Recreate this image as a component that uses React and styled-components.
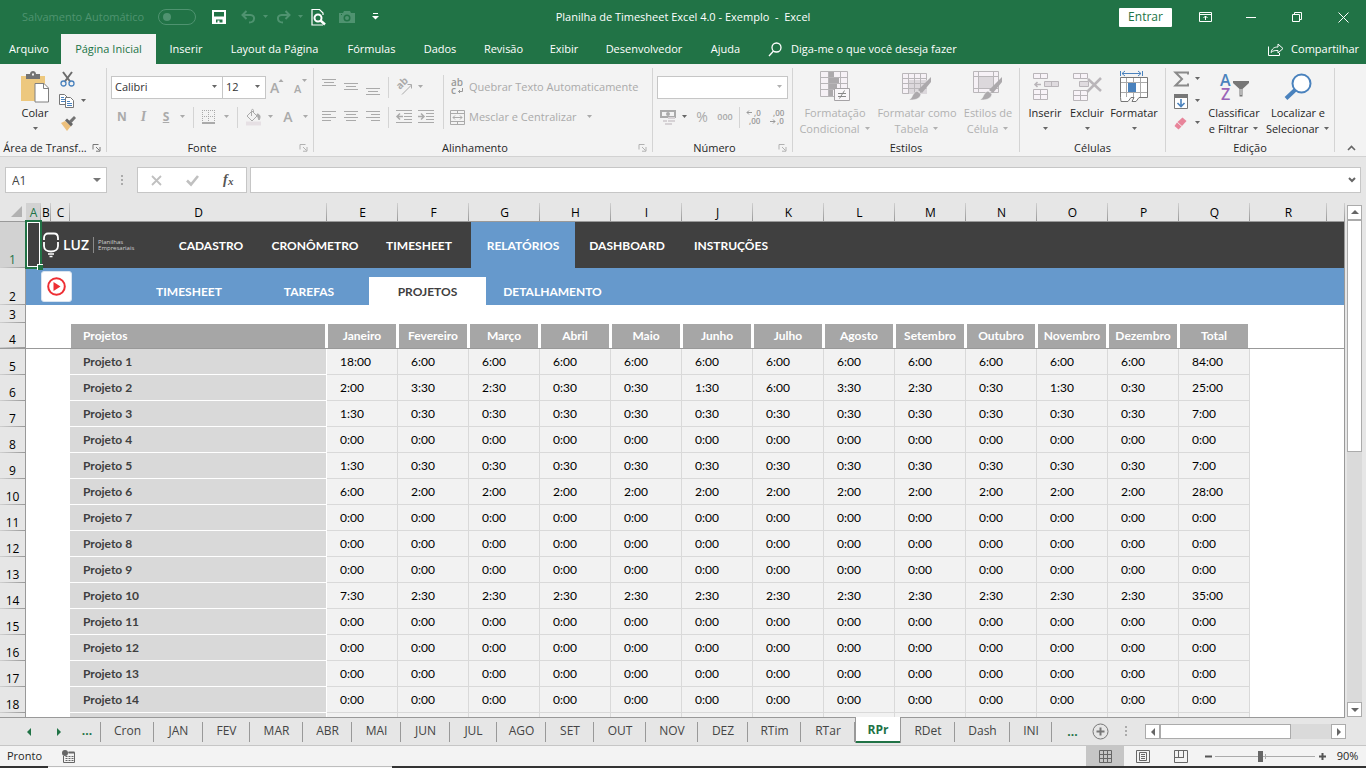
import React from "react";
import styled, { createGlobalStyle, css } from "styled-components";

const GlobalStyle = createGlobalStyle`
  *, *::before, *::after { box-sizing: border-box; }
  body { margin: 0; background: #e6e6e6; }
  button, input, select { font: inherit; color: inherit; margin: 0; }
  svg { display: block; flex: none; overflow: visible; }
`;

const UI = '"Open Sans", "Noto Sans", sans-serif';
const CELL = 'Lato, "Open Sans", sans-serif';
const GREEN = "#217346";
const INK = "#262626";
const DIM = "#b1b1b1";
const LINE = "#999999";

const Window = styled.div`
  display: flex;
  flex-direction: column;
  height: 100vh;
  min-width: 1100px;
  overflow: hidden;
  font: 11px/16px ${UI};
  color: ${INK};
`;

const PlainButton = styled.button`
  display: flex;
  align-items: center;
  justify-content: center;
  padding: 0;
  border: 0;
  background: transparent;
  white-space: nowrap;
`;

/* ---------- title bar ---------- */
const TitleBar = styled.header`
  display: grid;
  grid-template-columns: 1fr auto 1fr;
  align-items: center;
  height: 34px;
  flex: none;
  background: ${GREEN};
  color: #fff;
`;
const QuickAccess = styled.div`
  display: flex;
  align-items: center;
  padding-left: 22px;
`;
const AutoSave = styled.label`
  display: flex;
  align-items: center;
  justify-content: space-between;
  width: 174px;
  margin-right: 8px;
  color: #4f9370;
  white-space: nowrap;
`;
const Toggle = styled.input`
  appearance: none;
  width: 38px;
  height: 16px;
  border: 1px solid #4f9370;
  border-radius: 8px;
  padding: 3px 4px;
  &::before {
    content: "";
    display: block;
    width: 8px;
    height: 8px;
    border-radius: 4px;
    background: #4f9370;
  }
`;
const QuickButton = styled(PlainButton)`
  width: ${(p) => p.$w}px;
  height: 24px;
  color: ${(p) => (p.$off ? "#4f9370" : "#fff")};
`;
const Title = styled.h1`
  margin: 0;
  font: inherit;
  white-space: pre;
`;
const WindowTools = styled.div`
  display: flex;
  align-items: center;
  justify-content: flex-end;
`;
const SignIn = styled.button`
  width: 53px;
  height: 19px;
  margin-right: 10px;
  padding: 0;
  border: 0;
  border-radius: 1px;
  background: #fff;
  color: ${GREEN};
  font-size: 12px;
  line-height: 18px;
`;
const WindowButton = styled(PlainButton)`
  width: 46px;
  height: 32px;
`;

/* ---------- ribbon tabs ---------- */
const TabBar = styled.nav`
  display: flex;
  height: 30px;
  flex: none;
  background: ${GREEN};
  color: #fff;
`;
const RibbonTab = styled(PlainButton)`
  width: ${(p) => p.$w}px;
  ${(p) => p.$first && css`margin-right: 3px;`}
  ${(p) => p.$active && css`background: #f3f3f3; color: ${GREEN};`}
`;
const TellMe = styled(PlainButton)`
  gap: 9px;
  margin-left: 14px;
`;
const Share = styled(PlainButton)`
  gap: 7px;
  margin-left: auto;
  padding-right: 7px;
`;

/* ---------- ribbon ---------- */
const Ribbon = styled.div`
  display: flex;
  height: 93px;
  flex: none;
  padding-top: 4px;
  background: #f3f3f3;
  border-bottom: 1px solid #d2d2d2;
`;
const Group = styled.section`
  display: flex;
  flex-direction: column;
  flex: none;
  width: ${(p) => p.$w}px;
  height: 88px;
  padding-right: 1px;
  background: linear-gradient(#d4d4d4, #d4d4d4) right top / 1px 84px no-repeat;
`;
const GroupBody = styled.div`
  display: flex;
  flex: 1;
  min-height: 0;
  padding: ${(p) => p.$pad || "0"};
`;
const GroupFoot = styled.div`
  display: grid;
  grid-template-columns: ${(p) => (p.$launch ? "1fr 16px" : "1fr")};
  align-items: center;
  height: 17px;
  padding: 0 2px;
`;
const GroupName = styled.h2`
  margin: 0;
  font: inherit;
  text-align: center;
  white-space: nowrap;
`;
const Big = styled(PlainButton)`
  flex-direction: column;
  justify-content: flex-start;
  flex: none;
  width: ${(p) => p.$w}px;
  height: 70px;
  color: ${(p) => (p.$off ? DIM : INK)};
`;
const BigIcon = styled.span`
  display: flex;
  align-items: center;
  justify-content: center;
  height: 37px;
`;
const BigLine = styled.span`
  display: flex;
  align-items: center;
  gap: 4px;
  height: 16px;
`;
const Stack = styled.div`
  display: flex;
  flex-direction: column;
  gap: ${(p) => p.$gap || 0}px;
`;
const ToolRow = styled.div`
  display: flex;
  align-items: center;
  height: ${(p) => (p.$compact ? 22 : 24)}px;
  color: ${(p) => (p.$off ? "#aaa" : "#666")};
`;
const Tool = styled(PlainButton)`
  width: ${(p) => p.$w}px;
  height: 22px;
`;
const Letter = styled.span`
  font-size: ${(p) => p.$size || 14}px;
  font-weight: ${(p) => p.$weight || 700};
  font-style: ${(p) => (p.$italic ? "italic" : "normal")};
  font-family: ${(p) => (p.$italic ? '"Liberation Serif", serif' : UI)};
  text-decoration: ${(p) => (p.$under ? "underline" : "none")};
`;
const TextTool = styled(PlainButton)`
  gap: 4px;
  height: 22px;
`;
const Rule = styled.span`
  width: 1px;
  height: ${(p) => p.$h || 21}px;
  margin: 0 ${(p) => p.$m || 0}px;
  background: #d4d4d4;
`;
const Combo = styled.span`
  display: grid;
  align-items: center;
  width: ${(p) => p.$w}px;
  height: 23px;
  margin-right: -1px;
  border: 1px solid #c6c6c6;
  background: #fff;
  color: #666;
  > * { grid-area: 1 / 1; }
  > svg { justify-self: end; margin-right: 4px; pointer-events: none; }
`;
const Select = styled.select`
  appearance: none;
  width: 100%;
  height: 21px;
  padding: 0 3px;
  border: 0;
  background: transparent;
  color: #333;
`;
const Collapse = styled(PlainButton)`
  align-self: flex-end;
  height: 17px;
  margin-left: auto;
  margin-right: 10px;
  color: #666;
`;

/* ---------- formula bar ---------- */
const FormulaRow = styled.div`
  display: flex;
  align-items: center;
  height: 46px;
  flex: none;
  padding: 0 5px;
  background: #e6e6e6;
`;
const Box = styled.div`
  display: flex;
  align-items: center;
  height: 26px;
  border: 1px solid #c6c6c6;
  background: #fff;
  ${(p) => (p.$w ? css`width: ${p.$w}px;` : css`flex: 1;`)}
`;
const BoxInput = styled.input`
  flex: 1;
  min-width: 0;
  height: 24px;
  padding: 0 6px;
  border: 0;
  background: transparent;
  color: #444;
  font-size: 12px;
`;
const Dots = styled.span`
  display: flex;
  align-items: center;
  justify-content: center;
  flex: none;
  width: ${(p) => p.$w}px;
  color: #ababab;
`;

/* ---------- worksheet ---------- */
const Work = styled.main`
  display: flex;
  flex: 1;
  min-height: 0;
  background: #e6e6e6;
`;
const SheetPane = styled.div`
  flex: 1;
  min-width: 0;
  overflow: hidden;
  background: linear-gradient(#e6e6e6 18px, #fff 18px);
`;
const Sheet = styled.table`
  width: 100%;
  table-layout: fixed;
  border-collapse: separate;
  border-spacing: 0;
  background: #fff;
  font-size: 12px;
`;
const Row = styled.tr`
  height: ${(p) => p.$h}px;
  > * { padding: 0; }
`;
const Corner = styled.td`
  background: #e6e6e6;
  border-bottom: 1px solid ${LINE};
  > svg { margin-left: 11px; }
`;
const ColHead = styled.th`
  border-bottom: 1px solid ${(p) => (p.$on ? GREEN : LINE)};
  background: linear-gradient(#d0d0d0, ${LINE}) right / 1px 100% no-repeat, ${(p) => (p.$on ? "#d2d2d2" : "#e6e6e6")};
  color: ${(p) => (p.$on ? GREEN : "#000")};
  font-weight: 400;
  ${Row} > & { padding-top: 2px; }
`;
const RowHead = styled.th`
  border-right: 1px solid ${LINE};
  background: linear-gradient(90deg, #d0d0d0, ${LINE}) bottom / 100% 1px no-repeat, ${(p) => (p.$on ? "#d2d2d2" : "#e6e6e6")};
  color: ${(p) => (p.$on ? GREEN : "#000")};
  font-weight: 400;
  line-height: 16px;
  vertical-align: bottom;
  ${(p) => p.$freeze && css`border-bottom: 1px solid ${LINE};`}
`;
const BandCell = styled.td`
  position: relative;
  background: ${(p) => (p.$blue ? "#6699cc" : "#404040")};
  border-right: 1px solid ${LINE};
`;
const Cursor = styled.span`
  position: absolute;
  z-index: 1;
  top: -2px;
  left: -1px;
  width: 17px;
  height: 49px;
  border: 2px solid ${GREEN};
  box-shadow: inset 0 0 0 1px #fff;
  &::after {
    content: "";
    position: absolute;
    right: -3px;
    bottom: -3px;
    width: 6px;
    height: 6px;
    background: ${GREEN};
    border-top: 1px solid #fff;
    border-left: 1px solid #fff;
  }
`;
const Band = styled.div`
  display: flex;
  align-items: ${(p) => (p.$low ? "flex-end" : "stretch")};
  height: ${(p) => p.$h}px;
`;
const Brand = styled.div`
  display: flex;
  align-items: center;
  width: 133px;
  padding-left: 16px;
  color: #fff;
`;
const BrandName = styled.span`
  margin-left: 3px;
  padding-right: 4px;
  border-right: 1px solid #8a8a8a;
  font: 600 14px/16px "Open Sans", sans-serif;
`;
const BrandSub = styled.span`
  margin-left: 4px;
  color: #d0d0d0;
  font: 6px/6px "Open Sans", sans-serif;
`;
const PlayTile = styled(PlainButton)`
  width: 31px;
  height: 31px;
  margin: 0 57px 3px 15px;
  border-radius: 3px;
  background: #fff;
  border: 1px solid #d9e4f0;
`;
const NavLink = styled.a`
  display: flex;
  align-items: center;
  justify-content: center;
  width: ${(p) => p.$w}px;
  ${(p) => p.$h && css`height: ${p.$h}px;`}
  padding-top: 1px;
  color: ${(p) => p.$ink || "#fff"};
  background: ${(p) => p.$bg || "transparent"};
  font: 700 12px/16px ${CELL};
  text-decoration: none;
`;
const Blank = styled.td`
  ${(p) => p.$freeze && css`border-bottom: 1px solid ${LINE};`}
  ${(p) => p.$last && css`border-right: 1px solid ${LINE};`}
`;
const FieldHead = styled.th`
  border-bottom: 1px solid ${LINE};
  box-shadow: inset 1px 1px 0 #fff, inset -2px 0 0 #fff;
  background: #a6a6a6;
  color: #fff;
  font: 700 12px/16px ${CELL};
  text-align: ${(p) => (p.$left ? "left" : "center")};
  ${Row} > & { padding: 0 1px 0 ${(p) => (p.$left ? 13 : 0)}px; }
`;
const Project = styled.th`
  border-right: 1px solid #fff;
  border-bottom: 1px solid #fff;
  background: #d9d9d9;
  color: #404040;
  font: 700 12px/16px ${CELL};
  text-align: left;
  ${Row} > & { padding: 0 0 0 13px; }
`;
const Hours = styled.td`
  border-right: 1px solid #d9d9d9;
  border-bottom: 1px solid #d9d9d9;
  background: #f2f2f2;
  color: #000;
  font: 12px/16px ${CELL};
  ${Row} > & { padding: 0 0 0 13px; }
`;
const VScroll = styled.div`
  display: flex;
  flex-direction: column;
  flex: none;
  width: 15px;
  margin: 2px 4px 0 2px;
  background: #dadada;
`;
const ScrollButton = styled(PlainButton)`
  width: 15px;
  height: 15px;
  flex: none;
  border: 1px solid #ababab;
  background: #fff;
  color: #666;
  ${(p) => p.$end === "bottom" && css`margin-top: auto;`}
  ${(p) => p.$end === "right" && css`margin-left: auto;`}
`;
const VThumb = styled.div`
  height: 232px;
  width: 15px;
  border: 1px solid #ababab;
  background: #fff;
`;

/* ---------- sheet tabs ---------- */
const TabStrip = styled.div`
  display: flex;
  height: 28px;
  flex: none;
  background: #e6e6e6;
  font-size: 12px;
`;
const TabsArea = styled.div`
  display: flex;
  flex: 1;
  min-width: 0;
  margin-right: 21px;
  padding-left: 14px;
  border-top: 1px solid ${LINE};
`;
const TabNav = styled(PlainButton)`
  flex: none;
  width: ${(p) => p.$w}px;
  color: ${GREEN};
  font-weight: 700;
`;
const SheetTab = styled(PlainButton)`
  flex: none;
  width: ${(p) => p.$w}px;
  padding-bottom: 2px;
  color: #444;
  background: linear-gradient(${LINE}, ${LINE}) right center / 1px 20px no-repeat;
  ${(p) => p.$more && css`
    color: ${GREEN};
    font-weight: 700;
  `}
  ${(p) => p.$active && css`
    margin-top: -1px;
    height: 26px;
    padding: 0;
    background: #fff;
    color: ${GREEN};
    font-weight: 700;
    border: solid ${LINE};
    border-width: 0 1px;
    box-shadow: inset 0 -2px 0 ${GREEN};
  `}
`;
const HScroll = styled.div`
  display: flex;
  align-items: center;
  flex: none;
  width: 201px;
  height: 15px;
  margin: 6px 0 0 auto;
  background: #dadada;
`;
const HThumb = styled.div`
  width: 131px;
  height: 15px;
  border: 1px solid #ababab;
  background: #fff;
`;

/* ---------- status bar ---------- */
const StatusBar = styled.footer`
  display: flex;
  align-items: center;
  height: 21px;
  flex: none;
  border-top: 1px solid #c6c6c6;
  background: #f3f3f3;
`;
const StatusText = styled.span`
  width: 62px;
  padding-left: 7px;
`;
const ViewButton = styled(PlainButton)`
  width: 38px;
  height: 20px;
  color: #666;
  background: ${(p) => (p.$on ? "#c6c6c6" : "transparent")};
`;
const Views = styled.div`
  display: flex;
  margin-left: auto;
  margin-right: 1px;
`;
const ZoomButton = styled(PlainButton)`
  width: 14px;
  height: 20px;
  color: #555;
`;
const Zoom = styled.input`
  appearance: none;
  width: 100px;
  height: 14px;
  background: linear-gradient(#ababab, #ababab) center / 100% 1px no-repeat,
    linear-gradient(#ababab, #ababab) center / 1px 5px no-repeat;
  &::-webkit-slider-thumb {
    appearance: none;
    width: 5px;
    height: 11px;
    background: #666;
  }
`;
const ZoomValue = styled.output`
  width: 37px;
  text-align: center;
`;
const Edge = styled.div`
  display: flex;
  height: 2px;
  flex: none;
  background: #333;
`;
const EdgeLight = styled.span`
  width: 344px;
  margin-left: 48px;
  background: #fafafa;
  border-top: 1px solid #bdbdbd;
`;

/* ---------- icons ---------- */
const Svg = ({ w, h, children, ...rest }) => (
  <svg width={w} height={h} viewBox={`0 0 ${w} ${h}`} fill="none" stroke="currentColor" aria-hidden="true" {...rest}>
    {children}
  </svg>
);
const Caret = ({ color = "currentColor" }) => (
  <Svg w={7} h={4} stroke="none"><path d="M1 0h5L3.500 3z" fill={color} /></Svg>
);
const Launch = ({ off }) => (
  <Svg w={9} h={9} color={off ? "#b1b1b1" : "#777"}><path d="M1 6.500V1.500h5.500M4 4l3.500 3.500M8 4v4.200H4" /></Svg>
);
const ArrowTri = ({ dir }) => {
  const d = { up: "M0 5h8L4 1z", down: "M0 2h8L4 6z", left: "M6 0v8L2 4z", right: "M2 0v8l4-4z" }[dir];
  return <Svg w={8} h={8} stroke="none"><path d={d} fill="currentColor" /></Svg>;
};
const SaveIcon = () => (
  <Svg w={14} h={14} stroke="none"><path fill="currentColor" fillRule="evenodd" d="M0 0h14v14H0zM2 2v4.500h10V2zM4 9.500V12.500h1.500V10.500h2V12.500H10.500V9.500z" /></Svg>
);
const UndoIcon = () => (
  <Svg w={15} h={14} strokeWidth="2"><path d="M5.500 1L1.500 5l4 4M2 5h7.500c5 0 5 7.500-1.500 7.500" /></Svg>
);
const RedoIcon = () => (
  <Svg w={15} h={14} strokeWidth="2"><path d="M9.500 1l4 4-4 4M13 5H5.500C.5 5 .5 12.500 7 12.500" /></Svg>
);
const PreviewIcon = () => (
  <Svg w={16} h={17}>
    <path d="M12 6V4L8.500 .5H1v15.500h11" strokeWidth="1.200" /><circle cx="7" cy="9" r="3.500" strokeWidth="2" /><path d="M9.500 11.500l4.500 4" strokeWidth="2.500" />
  </Svg>
);
const CameraIcon = () => (
  <Svg w={16} h={12} stroke="none"><path fill="currentColor" fillRule="evenodd" d="M0 2h4l1-2h6l1 2h4v10H0zM2 4h1V3H2zM8 3.500a3.500 3.500 0 1 0 0 7 3.500 3.500 0 0 0 0-7zM8 5a2 2 0 1 1 0 4 2 2 0 0 1 0-4z" /></Svg>
);
const CustomizeIcon = () => (
  <Svg w={7} h={8} stroke="none"><path fill="currentColor" d="M1 0h5v1H1zM0 3h7L3.500 6.500z" /></Svg>
);
const RibbonModeIcon = () => (
  <Svg w={13} h={11}><path d="M.5 .5h12v9H.5zM.5 2.500h12M6.500 8V4M4.500 6l2-2 2 2" /></Svg>
);
const RestoreIcon = () => (
  <Svg w={10} h={10}><path d="M.5 2.500h7v7h-7zM2.500 2.500v-2h7v7h-2" /></Svg>
);
const CloseIcon = () => (<Svg w={11} h={11}><path d="M.5 .5l10 10M10.500 .5l-10 10" /></Svg>);
const SearchIcon = () => (
  <Svg w={14} h={15} strokeWidth="1.300"><circle cx="8.500" cy="5.500" r="4.500" /><path d="M5.500 9L1 14" /></Svg>
);
const ShareIcon = () => (
  <Svg w={16} h={14}><path d="M.5 4.500v9h11V11M3 10.500c1-4 3-5.500 7-5.500V2l5 4.500-5 4.500V8.500c-3 0-5 0-7 2z" /></Svg>
);
const PasteIcon = () => (
  <Svg w={30} h={32} stroke="none">
    <path d="M1 5h24v25H1z" fill="#edc87e" /><path d="M6 3h4c0-4 6-4 6 0h4v5H6z" fill="#737373" /><path d="M12 2.500h2v2h-2z" fill="#f3f3f3" />
    <path d="M15 12.500h9l4.500 4.500v14H15z" fill="#fff" stroke="#808080" /><path d="M23.500 12.500v5h5" fill="none" stroke="#808080" />
  </Svg>
);
const CutIcon = () => (
  <Svg w={15} h={16}><path d="M3 1l7.500 10M12 1L4.500 11" stroke="#6b6b6b" strokeWidth="2" /><circle cx="3.500" cy="12.500" r="2.500" stroke="#4a82bd" strokeWidth="1.300" /><circle cx="11.500" cy="12.500" r="2.500" stroke="#4a82bd" strokeWidth="1.300" /></Svg>
);
const CopyIcon = () => (
  <Svg w={16} h={15}>
    <path d="M.5 .5h5l3 3v7h-8z" fill="#fff" stroke="#777" /><path d="M2 3.500h3M2 5.500h4M2 7.500h4" stroke="#4a82bd" />
    <path d="M6.500 3.500h5l3 3v7h-8z" fill="#fff" stroke="#777" /><path d="M8 7.500h3M8 9.500h5M8 11.500h5" stroke="#4a82bd" />
  </Svg>
);
const PainterIcon = () => (
  <Svg w={16} h={15} stroke="none"><path d="M1 7l4-2 6 5-4 5z" fill="#edc07c" /><path d="M5 4.500l2-2 6 5.500-2 2.500z" fill="#666" /><path d="M9 5l5-5 2 2-4.500 5z" fill="#737373" /></Svg>
);
const GrowIcon = ({ down }) => (
  <Svg w={16} h={16} stroke="none">
    <text x="0" y="14" fontFamily="Open Sans, sans-serif" fontWeight="600" fontSize={down ? 11 : 14} fill="currentColor">A</text>
    <path d={down ? "M8 0h5l-2.500 3z" : "M8.500 3h5L11 0z"} fill="currentColor" />
  </Svg>
);
const BorderIcon = () => (
  <Svg w={14} h={14} strokeDasharray="1 1"><path d="M.5 0v12M6.500 0v12M12.500 0v12M0 .5h13M0 6.500h13" /><path d="M0 13h13" strokeDasharray="none" strokeWidth="2" /></Svg>
);
const BucketIcon = () => (
  <Svg w={17} h={17}><path d="M2 7l5-5 5 5-5 5zM6.500 7V1.500c0-1.500 2-1.500 2 0V3" /><path d="M12 5c3 0 4 3 2 6-1-2-1-3-2-6z" fill="currentColor" /><path d="M1 14.500h15" stroke="#e6e0e4" strokeWidth="4" /></Svg>
);
const Lines = ({ rows }) => (
  <Svg w={14} h={20}><path d={rows.map(([x, y, w]) => `M${x} ${y}.5h${w}`).join("")} /></Svg>
);
const LINES = {
  top: [[0, 2, 14], [2, 5, 10], [0, 8, 14]],
  mid: [[0, 6, 14], [2, 9, 10], [0, 12, 14]],
  bot: [[0, 11, 14], [2, 14, 10], [0, 17, 14]],
  left: [[0, 4, 14], [0, 7, 9], [0, 10, 14], [0, 13, 9]],
  center: [[0, 4, 14], [2, 7, 10], [0, 10, 14], [2, 13, 10]],
  right: [[0, 4, 14], [5, 7, 9], [0, 10, 14], [5, 13, 9]],
};
const OrientIcon = () => (
  <Svg w={18} h={18}>
    <text x="0" y="0" transform="translate(5 12) rotate(-45)" stroke="none" fill="currentColor" fontFamily="Open Sans, sans-serif" fontWeight="700" fontSize="10">ab</text>
    <path d="M7 16.500L16.500 7M12.500 6.500h4v4" />
  </Svg>
);
const IndentIcon = ({ right }) => (
  <Svg w={16} h={14}>
    <path d="M0 .5h16M8 3.500h8M8 6.500h8M8 9.500h8M0 12.500h16" />
    <path d={right ? "M0 6.500h5M3 3.500l3 3-3 3" : "M1 6.500h6M4 3.500l-3 3 3 3"} strokeWidth="1.500" />
  </Svg>
);
const WrapIcon = () => (
  <Svg w={15} h={18} stroke="none">
    <g fill="#999" fontFamily="Open Sans, sans-serif" fontWeight="600" fontSize="10"><text x="1" y="8">ab</text><text x="1" y="16">c</text></g>
    <path d="M12.500 10v3.500H8.500M10 12l-1.500 1.500L10 15" stroke="#999" fill="none" />
  </Svg>
);
const MergeIcon = () => (
  <Svg w={15} h={15}><path d="M.5 .5h14v14H.5zM.5 3.500h14M.5 11.500h14M7.500 .5v3M7.500 11.500v3M3 7.500h9M5 5.500l-2 2 2 2M10 5.500l2 2-2 2" /></Svg>
);
const MoneyIcon = () => (
  <Svg w={17} h={17} stroke="none"><path fill="currentColor" fillRule="evenodd" d="M0 1h16v8H0zM2 3v4h12V3zM8 3a2 2 0 1 1 0 4 2 2 0 0 1 0-4z" /><path d="M8 8h7v2H8zM8 11h7v2H8zM3 11h4v2H3zM5 14h7v2H5z" fill="#d6d2d5" /></Svg>
);
const DecimalIcon = ({ less }) => (
  <Svg w={16} h={16} color="#999">
    <g stroke="none" fill="currentColor" fontFamily="Open Sans, sans-serif" fontWeight="600" fontSize="8">
      <text x={less ? 4 : 8} y="7">{less ? ",00" : ",0"}</text><text x={less ? 8 : 3} y="15">{less ? ",0" : ",00"}</text>
    </g>
    <path d={less ? "M1 12.500h5M4 10.500l2 2-2 2" : "M1 3.500h5M3 1.500l-2 2 2 2"} />
  </Svg>
);
const CondIcon = () => (
  <Svg w={30} h={31} color="#b8b5b8">
    <path d="M.5 .5h27v25H.5z" fill="#f6f1f6" /><path d="M.5 6.500h27M.5 12.500h27M.5 18.500h27M8.500 .5v25M20.500 .5v25" />
    <path d="M9 1h5v5H9zM9 7h10v5H9zM9 13h8v5H9zM9 19h4v6H9z" fill="#aca9ac" stroke="none" />
    <path d="M14.500 17.500h15v12h-15z" fill="#f9f6f9" stroke="#a5a2a5" /><path d="M18 22.500h8M18 25.500h8M24.500 19.500l-5 8" stroke="#888" />
  </Svg>
);
const Brush = () => (
  <g stroke="none" fill="#aca9ac"><path d="M29 6v5l-9 11-4-3z" /><path d="M15 20l4 3c-1 6-8 6-12 6 4-2 3-7 8-9z" stroke="#f3f3f3" strokeWidth=".6" /></g>
);
const TableFmtIcon = () => (
  <Svg w={30} h={31} color="#bab7ba">
    <path d="M.5 2.500h24v20H.5z" fill="#f6f1f6" /><path d="M7 9h18v14H7z" fill="#dcd8dc" stroke="none" /><path d="M.5 7.500h24M.5 12.500h24M.5 17.500h24M6.500 2.500v20M12.500 2.500v20M18.500 2.500v20" /><Brush />
  </Svg>
);
const CellStyleIcon = () => (
  <Svg w={30} h={31} color="#bab7ba">
    <path d="M.5 .5h25v21H.5z" fill="#f6f1f6" /><path d="M6 6h15v11H6z" fill="#dcd8dc" stroke="none" /><path d="M.5 5.500h25M.5 17.500h25M5.500 .5v21M20.500 .5v21" /><Brush />
  </Svg>
);
const InsertIcon = () => (
  <Svg w={27} h={28} color="#b9b5b9">
    <path d="M1.500 .5h14v5h-14zM8.500 .5v5M1.500 16.500h14v10h-14zM8.500 16.500v10M1.500 21.500h14" fill="#f8f3f8" />
    <path d="M12.500 8.500h14v5h-14zM19.500 8.500v5" fill="#dfdbdf" /><path d="M9 11.500H3M5.500 9L3 11.500 5.500 14" strokeWidth="1.600" />
  </Svg>
);
const DeleteIcon = () => (
  <Svg w={29} h={28} color="#b9b5b9">
    <path d="M.5 .5h14v5H.5zM7.500 .5v5M.5 17.500h14v10H.5zM7.500 17.500v10M.5 22.500h14" fill="#f8f3f8" />
    <path d="M6.500 8.500h9v5h-9z" fill="#dfdbdf" /><path d="M15 6l13 12M28 5L14 19" strokeWidth="2.500" />
  </Svg>
);
const FormatIcon = () => (
  <Svg w={28} h={31} color="#777">
    <path d="M.5 0v5M22.500 0v5M2 2.500h19M5 0L2 2.500 5 5M18 0l3 2.500L18 5" stroke="#4a82bd" />
    <path d="M.5 6.500h27v20H19l-3 4h-4l2-4h-3l-3 4H1l-.500-4z" fill="#fff" />
    <path d="M1 11.500h26M1 21.500h26M6.500 7v19M13.500 7v4M20.500 7v19M13.500 22v4" stroke="#aaa" /><path d="M8 12h8v9H8z" fill="#4a82bd" stroke="none" />
  </Svg>
);
const SumIcon = () => (<Svg w={15} h={16} strokeWidth="2"><path d="M14 3.500V1.500H1.500L8 8l-6.500 6.500H14v-2" stroke="#8a8a8a" /></Svg>);
const FillIcon = () => (
  <Svg w={14} h={15}><path d="M.5 .5h13v14H.5z" fill="#fff" stroke="#777" /><path d="M0 2h14" stroke="#777" strokeWidth="4" /><path d="M7 5v7M3.500 9L7 12.500 10.500 9" stroke="#4a82bd" strokeWidth="1.600" /></Svg>
);
const EraserIcon = () => (
  <Svg w={14} h={13} stroke="none"><path d="M8.500 0.500L12.500 4 8 9 3.500 5z" fill="#e8849a" /><path d="M3 5.500L7.500 9.500 4.500 12.500.5 9z" fill="#e8849a" /></Svg>
);
const SortIcon = () => (
  <Svg w={31} h={30} stroke="none">
    <g fontFamily="Open Sans, sans-serif" fontWeight="600" fontSize="16"><text x="1" y="14" fill="#4a82bd">A</text><text x="2" y="28" fill="#9a64b8">Z</text></g>
    <path d="M14 9h16v2l-6.500 6v7.500h-3V17L14 11z" fill="#777" /><path d="M22 17v6" stroke="#f3f3f3" />
  </Svg>
);
const FindIcon = () => (
  <Svg w={28} h={28}><circle cx="17.500" cy="10.500" r="9" fill="#fff" stroke="#4a82bd" strokeWidth="2" /><path d="M11 17L2 25.500" stroke="#4a82bd" strokeWidth="4" /></Svg>
);
const DotsIcon = () => (
  <Svg w={2} h={11} stroke="none"><path d="M0 0h2v2H0zM0 4h2v2H0zM0 8h2v2H0z" fill="currentColor" /></Svg>
);
const BulbLogo = () => (
  <Svg w={18} h={26} stroke="#fff" strokeWidth="1.800">
    <path d="M2 8V6c0-3 2-4.500 4-4.500h6c2 0 4 1.500 4 4.500v2M2 10v4c0 3.500 3 5.500 7 5.500s7-2 7-5.500v-4" /><path d="M6 22h6M7.500 24.500h3" strokeWidth="1.400" />
  </Svg>
);
const PlayIcon = () => (
  <Svg w={19} h={19}><circle cx="9.500" cy="9.500" r="8.300" stroke="#ee2e33" strokeWidth="2" /><path d="M6.500 5l7 4.500-7 4.500z" fill="#ee2e33" stroke="none" /></Svg>
);
const MacroIcon = () => (
  <Svg w={13} h={13} stroke="none"><path d="M1.500 6V12.500h11v-10H6.500" stroke="#666" /><path d="M6.500 1.500h6v2h-6z" fill="#666" /><circle cx="3" cy="3" r="3" fill="#666" /><path d="M3.500 6.500h8M3.500 8.500h8M3.500 10.500h8" stroke="#666" strokeDasharray="2 1" /></Svg>
);
const GridView = () => (<Svg w={13} h={13}><path d="M.5 .5h12v12H.5zM.5 4.500h12M.5 8.500h12M4.500 .5v12M8.500 .5v12" /></Svg>);
const PageView = () => (<Svg w={14} h={13}><path d="M.5 .5h13v12H.5zM3.500 2.500h7v8h-7zM5 4.500h4M5 6.500h4M5 8.500h4" /></Svg>);
const BreakView = () => (<Svg w={14} h={13}><path d="M.5 .5h13v12H.5zM4.500 .5v7M9.500 .5v7M0 7.500h10" /></Svg>);

/* ---------- data ---------- */
const TABS = [
  ["Arquivo", 58], ["Página Inicial", 95], ["Inserir", 60], ["Layout da Página", 117], ["Fórmulas", 77],
  ["Dados", 60], ["Revisão", 67], ["Exibir", 54], ["Desenvolvedor", 106], ["Ajuda", 57],
];
const COLS = [
  ["A", 15], ["B", 10], ["C", 19], ["D", 257], ["E", 71], ["F", 71], ["G", 71], ["H", 71], ["I", 71], ["J", 71],
  ["K", 71], ["L", 71], ["M", 71], ["N", 71], ["O", 71], ["P", 71], ["Q", 71], ["R", 77],
];
const MONTHS = ["Janeiro", "Fevereiro", "Março", "Abril", "Maio", "Junho", "Julho", "Agosto", "Setembro", "Outubro", "Novembro", "Dezembro", "Total"];
const same = (first, rest, total) => [first, ...Array(11).fill(rest), total];
const zero = same("0:00", "0:00", "0:00");
const HOURS = [
  same("18:00", "6:00", "84:00"),
  ["2:00", "3:30", "2:30", "0:30", "0:30", "1:30", "6:00", "3:30", "2:30", "0:30", "1:30", "0:30", "25:00"],
  same("1:30", "0:30", "7:00"),
  zero,
  same("1:30", "0:30", "7:00"),
  same("6:00", "2:00", "28:00"),
  zero, zero, zero,
  same("7:30", "2:30", "35:00"),
  zero, zero, zero, zero,
];
const MAIN_NAV = ["CADASTRO", "CRONÔMETRO", "TIMESHEET", "RELATÓRIOS", "DASHBOARD", "INSTRUÇÕES"];
const SUB_NAV = [["TIMESHEET", 120], ["TAREFAS", 120], ["PROJETOS", 117], ["DETALHAMENTO", 133]];
const SHEETS = [
  ["Cron", 53], ["JAN", 49], ["FEV", 47], ["MAR", 53], ["ABR", 49], ["MAI", 49], ["JUN", 49], ["JUL", 47], ["AGO", 49],
  ["SET", 48], ["OUT", 52], ["NOV", 52], ["DEZ", 50], ["RTim", 53], ["RTar", 54], ["RPr", 46], ["RDet", 54], ["Dash", 55], ["INI", 42],
];

function RibbonGroup({ name, w, pad, launch, off, children }) {
  return (
    <Group $w={w} aria-label={name}>
      <GroupBody $pad={pad}>{children}</GroupBody>
      <GroupFoot $launch={launch}>
        <GroupName>{name}</GroupName>
        {launch && <PlainButton aria-label={`Mais opções: ${name}`}><Launch off={off} /></PlainButton>}
      </GroupFoot>
    </Group>
  );
}

function BigTool({ icon, lines, w, off }) {
  return (
    <Big $w={w} $off={off}>
      <BigIcon>{icon}</BigIcon>
      <BigLine>{lines[0]}</BigLine>
      <BigLine>{lines[1]}<Caret color={off ? "#b1b1b1" : "#666"} /></BigLine>
    </Big>
  );
}

export default function App() {
  return (
    <Window>
      <GlobalStyle />
      <TitleBar>
        <QuickAccess>
          <AutoSave>Salvamento Automático<Toggle type="checkbox" /></AutoSave>
          <QuickButton $w={30} aria-label="Salvar"><SaveIcon /></QuickButton>
          <QuickButton $w={28} $off aria-label="Desfazer"><UndoIcon /></QuickButton>
          <QuickButton $w={7} $off aria-label="Opções de desfazer"><Caret /></QuickButton>
          <QuickButton $w={28} $off aria-label="Refazer"><RedoIcon /></QuickButton>
          <QuickButton $w={7} $off aria-label="Opções de refazer"><Caret /></QuickButton>
          <QuickButton $w={29} aria-label="Visualizar impressão"><PreviewIcon /></QuickButton>
          <QuickButton $w={28} $off aria-label="Câmera"><CameraIcon /></QuickButton>
          <QuickButton $w={28} aria-label="Personalizar"><CustomizeIcon /></QuickButton>
        </QuickAccess>
        <Title>Planilha de Timesheet Excel 4.0 - Exemplo  -  Excel</Title>
        <WindowTools>
          <SignIn>Entrar</SignIn>
          <WindowButton aria-label="Exibição da Faixa de Opções"><RibbonModeIcon /></WindowButton>
          <WindowButton aria-label="Minimizar"><Svg w={10} h={1}><path d="M0 .5h10" /></Svg></WindowButton>
          <WindowButton aria-label="Restaurar"><RestoreIcon /></WindowButton>
          <WindowButton aria-label="Fechar"><CloseIcon /></WindowButton>
        </WindowTools>
      </TitleBar>

      <TabBar>
        {TABS.map(([t, w], i) => (
          <RibbonTab key={t} $w={w} $first={i === 0} $active={i === 1}>{t}</RibbonTab>
        ))}
        <TellMe><SearchIcon />Diga-me o que você deseja fazer</TellMe>
        <Share><ShareIcon />Compartilhar</Share>
      </TabBar>

      <Ribbon>
        <RibbonGroup name="Área de Transf..." w={107} pad="0 0 0 14px" launch>
          <BigTool icon={<PasteIcon />} lines={["Colar", ""]} w={42} />
          <Stack>
            <Tool $w={22} aria-label="Recortar"><CutIcon /></Tool>
            <ToolRow $compact><Tool $w={22} aria-label="Copiar"><CopyIcon /></Tool><Tool $w={11} aria-label="Opções de cópia"><Caret /></Tool></ToolRow>
            <Tool $w={24} aria-label="Pincel de Formatação"><PainterIcon /></Tool>
          </Stack>
        </RibbonGroup>

        <RibbonGroup name="Fonte" w={207} pad="7px 0 0 4px" launch off>
          <Stack $gap={6}>
            <ToolRow $off>
              <Combo $w={112}><Select aria-label="Fonte"><option>Calibri</option></Select><Caret /></Combo>
              <Combo $w={44}><Select aria-label="Tamanho"><option>12</option></Select><Caret /></Combo>
              <Tool $w={26} aria-label="Aumentar fonte"><GrowIcon /></Tool>
              <Tool $w={22} aria-label="Diminuir fonte"><GrowIcon down /></Tool>
            </ToolRow>
            <ToolRow $off>
              <Tool $w={22} aria-label="Negrito"><Letter $size={12}>N</Letter></Tool>
              <Tool $w={21} aria-label="Itálico"><Letter $italic>I</Letter></Tool>
              <Tool $w={24} aria-label="Sublinhado"><Letter $size={12} $under>S</Letter></Tool>
              <Tool $w={9} aria-label="Opções de sublinhado"><Caret /></Tool>
              <Rule $m={6} />
              <Tool $w={18} aria-label="Bordas"><BorderIcon /></Tool>
              <Tool $w={16} aria-label="Opções de bordas"><Caret /></Tool>
              <Rule $m={3} />
              <Tool $w={24} aria-label="Cor de preenchimento"><BucketIcon /></Tool>
              <Tool $w={11} aria-label="Opções de preenchimento"><Caret /></Tool>
              <Tool $w={24} aria-label="Cor da fonte"><Letter $weight={600}>A</Letter></Tool>
              <Tool $w={11} aria-label="Opções de cor"><Caret /></Tool>
            </ToolRow>
          </Stack>
        </RibbonGroup>

        <RibbonGroup name="Alinhamento" w={339} pad="7px 0 0 4px" launch off>
          <Stack $gap={6}>
            <ToolRow $off>
              <Tool $w={22} aria-label="Alinhar acima"><Lines rows={LINES.top} /></Tool>
              <Tool $w={22} aria-label="Alinhar no meio"><Lines rows={LINES.mid} /></Tool>
              <Tool $w={22} aria-label="Alinhar abaixo"><Lines rows={LINES.bot} /></Tool>
              <Rule $m={4} />
              <Tool $w={22} aria-label="Orientação"><OrientIcon /></Tool>
              <Tool $w={11} aria-label="Opções de orientação"><Caret /></Tool>
            </ToolRow>
            <ToolRow $off>
              <Tool $w={22} aria-label="Alinhar à esquerda"><Lines rows={LINES.left} /></Tool>
              <Tool $w={22} aria-label="Centralizar"><Lines rows={LINES.center} /></Tool>
              <Tool $w={22} aria-label="Alinhar à direita"><Lines rows={LINES.right} /></Tool>
              <Rule $m={4} />
              <Tool $w={22} aria-label="Diminuir recuo"><IndentIcon /></Tool>
              <Tool $w={22} aria-label="Aumentar recuo"><IndentIcon right /></Tool>
            </ToolRow>
          </Stack>
          <Rule $h={54} $m={6} />
          <Stack $gap={6}>
            <ToolRow $off><TextTool><WrapIcon />Quebrar Texto Automaticamente</TextTool></ToolRow>
            <ToolRow $off>
              <TextTool><MergeIcon />Mesclar e Centralizar</TextTool>
              <Tool $w={26} aria-label="Opções de mesclagem"><Caret /></Tool>
            </ToolRow>
          </Stack>
        </RibbonGroup>

        <RibbonGroup name="Número" w={140} pad="7px 0 0 4px" launch off>
          <Stack $gap={6}>
            <ToolRow $off>
              <Combo $w={131}><Select aria-label="Formato de número"><option /></Select><Caret color="#b1b1b1" /></Combo>
            </ToolRow>
            <ToolRow $off>
              <Tool $w={22} aria-label="Formato contábil"><MoneyIcon /></Tool>
              <Tool $w={11} aria-label="Opções contábeis"><Caret color="#666" /></Tool>
              <Tool $w={24} aria-label="Porcentagem"><Letter $weight={400}>%</Letter></Tool>
              <Tool $w={22} aria-label="Separador de milhares"><Letter $size={9} $weight={600}>000</Letter></Tool>
              <Rule $m={3} />
              <Tool $w={22} aria-label="Aumentar casas decimais"><DecimalIcon /></Tool>
              <Tool $w={24} aria-label="Diminuir casas decimais"><DecimalIcon less /></Tool>
            </ToolRow>
          </Stack>
        </RibbonGroup>

        <RibbonGroup name="Estilos" w={227} pad="0 0 0 1px">
          <BigTool icon={<CondIcon />} lines={["Formatação", "Condicional"]} w={82} off />
          <BigTool icon={<TableFmtIcon />} lines={["Formatar como", "Tabela"]} w={82} off />
          <BigTool icon={<CellStyleIcon />} lines={["Estilos de", "Célula"]} w={60} off />
        </RibbonGroup>

        <RibbonGroup name="Células" w={146} pad="0 0 0 4px">
          <BigTool icon={<InsertIcon />} lines={["Inserir", ""]} w={42} />
          <BigTool icon={<DeleteIcon />} lines={["Excluir", ""]} w={42} />
          <BigTool icon={<FormatIcon />} lines={["Formatar", ""]} w={52} />
        </RibbonGroup>

        <RibbonGroup name="Edição" w={169} pad="0 0 0 4px">
          <Stack>
            <ToolRow $compact><Tool $w={22} aria-label="AutoSoma"><SumIcon /></Tool><Tool $w={11} aria-label="Opções de soma"><Caret /></Tool></ToolRow>
            <ToolRow $compact><Tool $w={22} aria-label="Preencher"><FillIcon /></Tool><Tool $w={11} aria-label="Opções de preencher"><Caret /></Tool></ToolRow>
            <ToolRow $compact><Tool $w={22} aria-label="Limpar"><EraserIcon /></Tool><Tool $w={11} aria-label="Opções de limpar"><Caret /></Tool></ToolRow>
          </Stack>
          <BigTool icon={<SortIcon />} lines={["Classificar", "e Filtrar"]} w={62} />
          <BigTool icon={<FindIcon />} lines={["Localizar e", "Selecionar"]} w={66} />
        </RibbonGroup>
        <Collapse aria-label="Recolher a Faixa de Opções"><Svg w={9} h={6} strokeWidth="1.600"><path d="M1 5l3.500-3.500L8 5" /></Svg></Collapse>
      </Ribbon>

      <FormulaRow>
        <Box $w={102}>
          <BoxInput aria-label="Caixa de nome" defaultValue="A1" />
          <Tool $w={18} aria-label="Nomes"><Svg w={8} h={5} stroke="none" color="#777"><path d="M0 0h8L4 4z" fill="currentColor" /></Svg></Tool>
        </Box>
        <Dots $w={30}><DotsIcon /></Dots>
        <Box $w={110}>
          <Tool $w={36} aria-label="Cancelar"><Svg w={11} h={11} color="#c0c0c0" strokeWidth="1.800"><path d="M1 1l9 9M10 1l-9 9" /></Svg></Tool>
          <Tool $w={36} aria-label="Inserir"><Svg w={13} h={11} color="#c0c0c0" strokeWidth="2.600"><path d="M1 5.500l4 4L12 1" /></Svg></Tool>
          <Tool $w={36} aria-label="Inserir função">
            <Svg w={14} h={15} stroke="none" color="#555"><text x="2" y="11" fontFamily="Liberation Serif, serif" fontStyle="italic" fontWeight="700" fontSize="14" fill="currentColor">f</text><text x="7" y="12" fontFamily="Liberation Serif, serif" fontStyle="italic" fontWeight="700" fontSize="11" fill="currentColor">x</text></Svg>
          </Tool>
        </Box>
        <Dots $w={3} />
        <Box>
          <BoxInput aria-label="Barra de fórmulas" />
          <Tool $w={16} aria-label="Expandir barra de fórmulas"><Svg w={8} h={6} strokeWidth="2" color="#666"><path d="M1 1l3 3 3-3" /></Svg></Tool>
        </Box>
      </FormulaRow>

      <Work>
        <SheetPane>
          <Sheet>
            <colgroup>
              <col width={26} />
              {COLS.map(([c, w]) => <col key={c} width={w} />)}
              <col />
            </colgroup>
            <thead>
              <Row $h={19}>
                <Corner><Svg w={12} h={12} stroke="none"><path d="M11 0v11H0z" fill="#b2b2b2" /></Svg></Corner>
                {COLS.map(([c], i) => <ColHead key={c} scope="col" $on={i === 0}>{c}</ColHead>)}
                <ColHead as="td" />
              </Row>
            </thead>
            <tbody>
              <Row $h={46}>
                <RowHead scope="row" $on>1</RowHead>
                <BandCell colSpan={19}>
                  <Cursor />
                  <Band $h={46}>
                    <Brand><BulbLogo /><BrandName>LUZ</BrandName><BrandSub>Planilhas<br />Empresariais</BrandSub></Brand>
                    {MAIN_NAV.map((n) => (
                      <NavLink key={n} href="#" $w={104} $bg={n === "RELATÓRIOS" ? "#6699cc" : undefined}>{n}</NavLink>
                    ))}
                  </Band>
                </BandCell>
              </Row>
              <Row $h={37}>
                <RowHead scope="row">2</RowHead>
                <BandCell colSpan={19} $blue>
                  <Band $h={37} $low>
                    <PlayTile aria-label="Assistir vídeo"><PlayIcon /></PlayTile>
                    {SUB_NAV.map(([n, w]) => (
                      <NavLink key={n} href="#" $w={w} $h={28} $ink={n === "PROJETOS" ? "#404040" : undefined} $bg={n === "PROJETOS" ? "#fff" : undefined}>{n}</NavLink>
                    ))}
                  </Band>
                </BandCell>
              </Row>
              <Row $h={18}>
                <RowHead scope="row">3</RowHead>
                <Blank colSpan={19} $last />
              </Row>
              <Row $h={26}>
                <RowHead scope="row" $freeze>4</RowHead>
                <Blank colSpan={3} $freeze />
                <FieldHead scope="col" $left>Projetos</FieldHead>
                {MONTHS.map((m) => <FieldHead key={m} scope="col">{m}</FieldHead>)}
                <Blank colSpan={2} $freeze $last />
              </Row>
              {HOURS.map((vals, r) => (
                <Row key={r} $h={26}>
                  <RowHead scope="row">{r + 5}</RowHead>
                  <Blank colSpan={3} />
                  <Project scope="row">{`Projeto ${r + 1}`}</Project>
                  {vals.map((v, i) => <Hours key={i}>{v}</Hours>)}
                  <Blank colSpan={2} $last />
                </Row>
              ))}
              <Row $h={26}>
                <RowHead as="td" />
                <Blank colSpan={3} />
                <Project as="td" />
                {MONTHS.map((m) => <Hours key={m} />)}
                <Blank colSpan={2} $last />
              </Row>
            </tbody>
          </Sheet>
        </SheetPane>
        <VScroll>
          <ScrollButton aria-label="Rolar para cima"><ArrowTri dir="up" /></ScrollButton>
          <VThumb />
          <ScrollButton $end="bottom" aria-label="Rolar para baixo"><ArrowTri dir="down" /></ScrollButton>
        </VScroll>
      </Work>

      <TabStrip>
        <TabsArea>
          <TabNav $w={30} aria-label="Planilha anterior"><ArrowTri dir="left" /></TabNav>
          <TabNav $w={29} aria-label="Próxima planilha"><ArrowTri dir="right" /></TabNav>
          <SheetTab $w={28} $more aria-label="Mais planilhas à esquerda">...</SheetTab>
          {SHEETS.map(([n, w]) => <SheetTab key={n} $w={w} $active={n === "RPr"}>{n}</SheetTab>)}
          <TabNav $w={41} aria-label="Mais planilhas à direita">...</TabNav>
          <TabNav $w={14} aria-label="Nova planilha">
            <Svg w={17} h={17} color="#777"><circle cx="8.500" cy="8.500" r="7.500" /><path d="M8.500 4.500v8M4.500 8.500h8" strokeWidth="2" /></Svg>
          </TabNav>
          <Dots $w={38}><DotsIcon /></Dots>
          <HScroll>
            <ScrollButton aria-label="Rolar para a esquerda"><ArrowTri dir="left" /></ScrollButton>
            <HThumb />
            <ScrollButton $end="right" aria-label="Rolar para a direita"><ArrowTri dir="right" /></ScrollButton>
          </HScroll>
        </TabsArea>
      </TabStrip>

      <StatusBar>
        <StatusText>Pronto</StatusText>
        <PlainButton aria-label="Gravar macro"><MacroIcon /></PlainButton>
        <Views>
          <ViewButton $on aria-label="Normal"><GridView /></ViewButton>
          <ViewButton aria-label="Layout da Página"><PageView /></ViewButton>
          <ViewButton aria-label="Quebra de Página"><BreakView /></ViewButton>
        </Views>
        <ZoomButton aria-label="Reduzir"><Svg w={7} h={7} strokeWidth="2"><path d="M0 3.500h7" /></Svg></ZoomButton>
        <Zoom type="range" aria-label="Zoom" min="0" max="200" defaultValue="90" />
        <ZoomButton aria-label="Ampliar"><Svg w={7} h={7} strokeWidth="2"><path d="M0 3.500h7M3.500 0v7" /></Svg></ZoomButton>
        <ZoomValue>90%</ZoomValue>
      </StatusBar>
      <Edge><EdgeLight /></Edge>
    </Window>
  );
}
